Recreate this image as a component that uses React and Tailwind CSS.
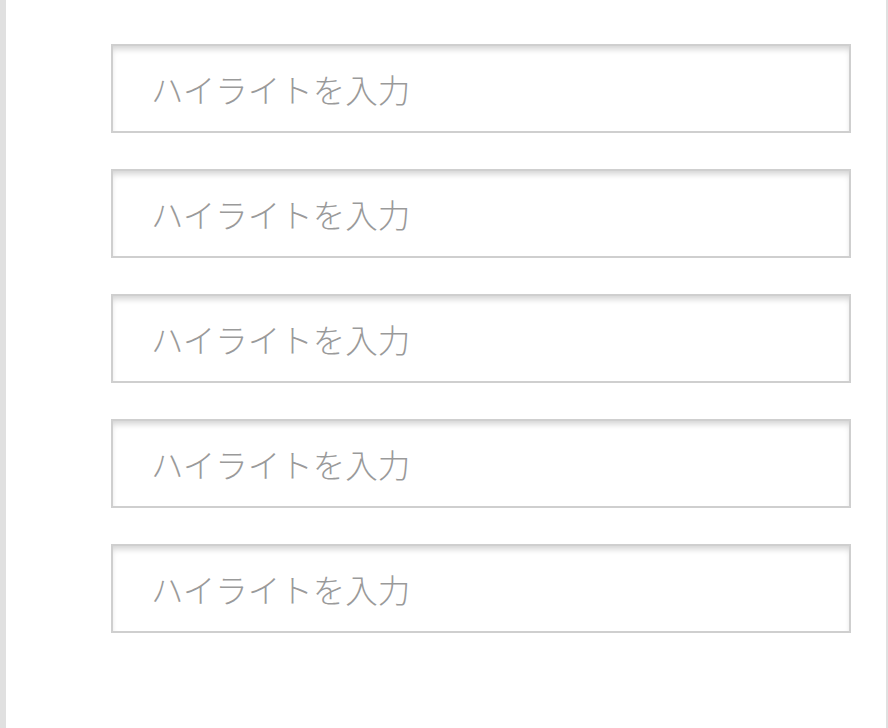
export default function App() {
  const rows = [0, 1, 2, 3, 4];
  return (
    <div className="min-h-[728px] bg-[#e0e0e0] px-[6px] pr-[2px]">
      <div className="min-h-[728px] bg-white pt-[44px] pl-[105px] pr-[35px] flex flex-col gap-[36px]">
        {rows.map((i) => (
          <input
            key={i}
            type="text"
            placeholder="ハイライトを入力"
            className="block w-[740px] h-[89px] border-2 border-[#cfcfcf] bg-white pl-[38px] text-[32.5px] font-light text-[#555] placeholder:text-[#9a9a9a] outline-none shadow-[inset_0_5px_6px_-2px_rgba(0,0,0,0.18)]"
            style={{ fontFamily: '"Noto Sans CJK JP", "Noto Sans", sans-serif' }}
          />
        ))}
      </div>
    </div>
  );
}
